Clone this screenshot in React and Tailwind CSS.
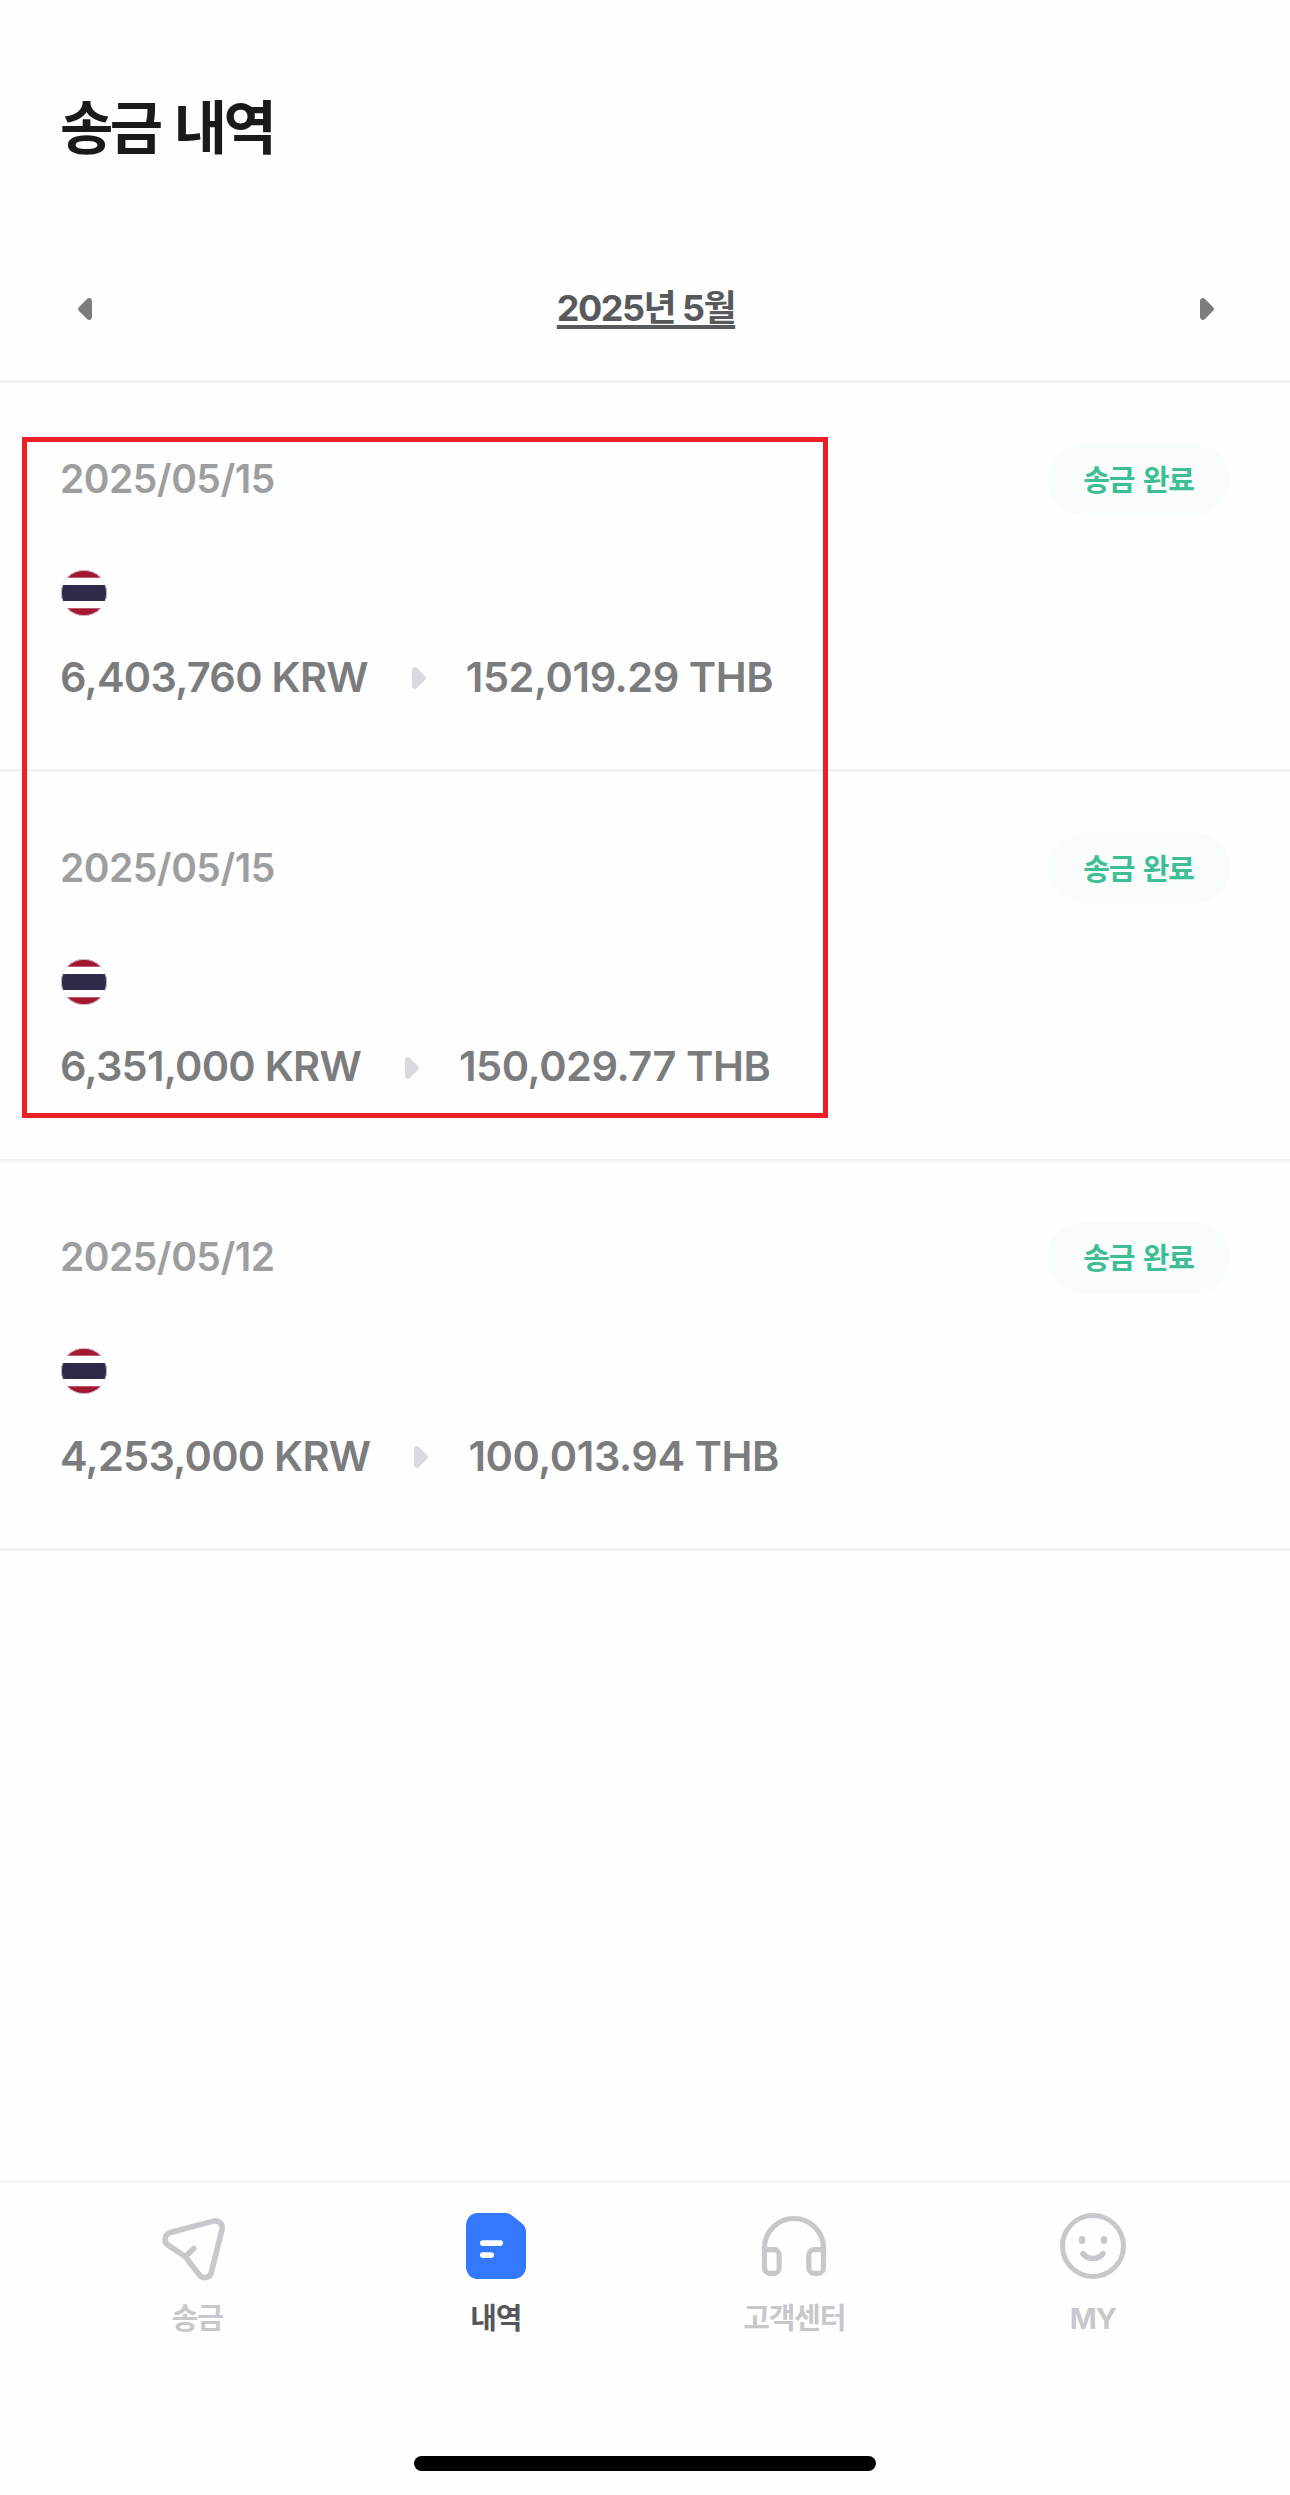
import React from 'react';

const transfers = [
  { id: 1, date: '2025/05/15', sent: '6,403,760 KRW', received: '152,019.29 THB', status: '송금 완료' },
  { id: 2, date: '2025/05/15', sent: '6,351,000 KRW', received: '150,029.77 THB', status: '송금 완료' },
  { id: 3, date: '2025/05/12', sent: '4,253,000 KRW', received: '100,013.94 THB', status: '송금 완료' },
];

const Triangle = ({ className = '' }) => (
  <svg viewBox="0 0 14 22" className={`w-[14px] h-[22px] shrink-0 ${className}`} fill="currentColor">
    <path d="M0 3C0 .4 3.1-.9 5 1l7.9 7.9a3 3 0 0 1 0 4.2L5 21c-1.9 1.9-5 .6-5-2z" />
  </svg>
);

const ThaiFlag = () => (
  <svg viewBox="0 0 46 46" className="w-[46px] h-[46px]">
    <defs>
      <clipPath id="flag-circle">
        <circle cx="23" cy="23" r="23" />
      </clipPath>
    </defs>
    <g clipPath="url(#flag-circle)">
      <rect width="46" height="46" fill="#fff" />
      <rect width="46" height="7.7" fill="#a2182f" />
      <rect y="15" width="46" height="16" fill="#2d2a4a" />
      <rect y="38.3" width="46" height="7.7" fill="#a2182f" />
    </g>
    <circle cx="23" cy="23" r="22.6" fill="none" stroke="#dfe3f5" strokeWidth="0.8" />
  </svg>
);

const SendIcon = () => (
  <svg viewBox="0 0 66 66" className="w-[66px] h-[66px] overflow-visible" fill="none" stroke="currentColor" strokeWidth="5.6" strokeLinecap="round" strokeLinejoin="round">
    <path d="M7.4 19.3 49.3 8.1c5.4-1.4 10 3.2 8.7 8.5L47.3 59.5c-1.4 5.7-8.8 7-12.3 2.2L21.4 43.7 4 32.2C-1.1 28.8.4 20.7 7.4 19.3z" />
    <path d="m21.4 43.7 8.4-8.2" />
  </svg>
);

const HistoryIcon = () => (
  <svg viewBox="0 0 66 66" className="w-[66px] h-[66px]">
    <path d="M14.5 0h27.3c2.8 0 5 .8 7.2 2.5l9.5 7.5c2.8 2.3 4.500 5.200 4.500 8.800V53.500C63 60.500 57.500 66 50.500 66h-36C8 66 3 60.500 3 53.500v-41C3 5.500 8 0 14.500 0z" fill="#3378ff" />
    <path d="M19.8 30.1h17.500M19.800 42.100h8.400" stroke="#fff" strokeWidth="5.6" strokeLinecap="round" />
  </svg>
);

const SupportIcon = () => (
  <svg viewBox="0 0 66 66" className="w-[66px] h-[66px]" fill="none" stroke="currentColor" strokeWidth="5.2">
    <path d="M3.5 37V35a29.5 29.5 0 0 1 59 0v2" />
    <path d="M3.5 36.7h9.300a5.400 5.400 0 0 1 5.400 5.400v12.800a5.400 5.400 0 0 1-5.400 5.400H8.900a5.400 5.400 0 0 1-5.400-5.400zM62.500 36.700h-9.300a5.400 5.400 0 0 0-5.400 5.400v12.800a5.400 5.400 0 0 0 5.400 5.400h3.900a5.400 5.400 0 0 0 5.400-5.400z" />
  </svg>
);

const SmileIcon = () => (
  <svg viewBox="0 0 66 66" className="w-[66px] h-[66px]" fill="none" stroke="currentColor">
    <circle cx="33" cy="33" r="30.5" strokeWidth="5" />
    <path d="M23 40.8c5 6.3 15 6.3 20 0" strokeWidth="5.6" strokeLinecap="round" />
    <rect x="18.8" y="23" width="6.4" height="8" rx="3.2" fill="currentColor" stroke="none" />
    <rect x="40.8" y="23" width="6.4" height="8" rx="3.2" fill="currentColor" stroke="none" />
  </svg>
);

const tabs = [
  { label: '송금', icon: SendIcon },
  { label: '내역', icon: HistoryIcon, active: true },
  { label: '고객센터', icon: SupportIcon },
  { label: 'MY', icon: SmileIcon },
];

const TransferRow = ({ date, sent, received, status }) => (
  <li className="h-[389.33px] border-b-3 border-[#f1f2f4] px-[60px] pt-[60px]">
    <div className="flex h-[72px] items-center justify-between">
      <span className="text-[39px] font-semibold tracking-[-0.5px] text-[#9d9e9f]">{date}</span>
      <span className="flex h-[72px] w-[183px] items-center justify-center rounded-full bg-[#f8fdfb] pt-[3px] text-[29px] font-bold tracking-[-1.1px] [word-spacing:2.5px] text-[#3fbd95]">
        {status}
      </span>
    </div>
    <div className="mt-[54.6px] ml-px">
      <ThaiFlag />
    </div>
    <div className="mt-[31.6px] flex h-[60px] items-center text-[41.5px] font-semibold text-[#7b7c7e]">
      <span className="tracking-[-0.75px]">{sent}</span>
      <Triangle className="mt-0.5 ml-[44px] mr-[40px] text-[#d9dae0]" />
      <span className="tracking-[-0.45px]">{received}</span>
    </div>
  </li>
);

const App = () => {
  return (
    <div className="relative flex h-[2495px] w-[1290px] flex-col overflow-hidden bg-[#fefefe] font-['Inter','Noto_Sans_CJK_KR',sans-serif]">
      <header className="h-[220px] px-[60px] pt-[88px]">
        <h1 className="text-[58px] leading-[80px] font-bold tracking-[-3.6px] [word-spacing:4px] text-[#1a1a1a]">송금 내역</h1>
      </header>

      <div className="flex h-[163px] items-center justify-between border-b-3 border-[#f1f2f4] px-[76px] pt-[18px]">
        <button type="button" className="ml-0.5 text-[#7b7c7e]">
          <Triangle className="rotate-180" />
        </button>
        <span className="pb-0.5 text-[36px] font-bold tracking-[-1.5px] text-[#58595c] underline decoration-4 underline-offset-[4px] [text-decoration-skip-ink:none]">
          2025년 5월
        </span>
        <button type="button" className="text-[#7b7c7e]">
          <Triangle />
        </button>
      </div>

      <ul className="flex-1">
        {transfers.map((item) => (
          <TransferRow key={item.id} {...item} />
        ))}
      </ul>

      <nav className="flex h-[315px] flex-col items-center border-t-3 border-[#f4f5f9] px-12">
        <div className="flex w-full pt-[30px]">
          {tabs.map(({ label, icon: Icon, active }) => (
            <div
              key={label}
              className={`flex flex-1 flex-col items-center ${active ? 'text-[#55565a]' : 'text-[#c7c8cc]'}`}
            >
              <Icon />
              <span className="mt-[18px] text-[29px] leading-[44px] font-bold tracking-[-1.2px]">{label}</span>
            </div>
          ))}
        </div>
        <div className="mt-auto mb-6 h-[15px] w-[462px] rounded-full bg-black" />
      </nav>

      {/* highlighted transfers */}
      <div className="pointer-events-none absolute top-[437px] left-[22px] h-[681px] w-[806px] border-5 border-[#eb1f25]" />
    </div>
  );
};

export default App;
